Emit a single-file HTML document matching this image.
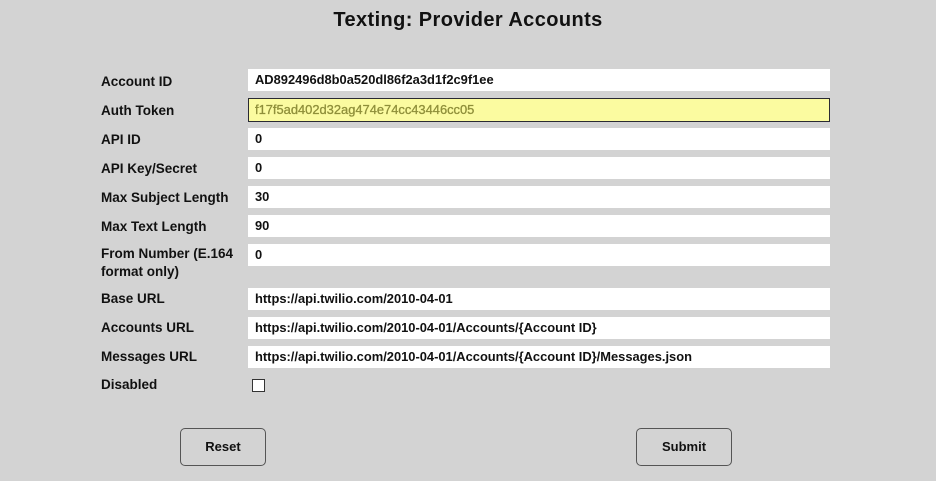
<!DOCTYPE html>
<html><head><meta charset="utf-8"><style>
html,body{margin:0;padding:0}
body{width:936px;height:481px;background:#d3d3d3;position:relative;overflow:hidden;font-family:"Liberation Sans",Arial,sans-serif;color:#111}
h1{position:absolute;top:9px;left:0;width:936px;text-align:center;margin:0;font-size:20px;font-weight:bold;letter-spacing:0.4px}
.l{position:absolute;left:101px;font-size:13.5px;font-weight:bold;line-height:18px}
.i{position:absolute;left:248px;width:582px;height:22px;background:#fff;font-size:12.9px;font-weight:bold;line-height:22px;padding-left:7px;box-sizing:border-box;white-space:nowrap}
.y{background:#fbfba0;border:1px solid #2a2a33;color:#8f8f3a;height:24px;line-height:22px;padding-left:6px;font-weight:normal;-webkit-text-stroke:0.3px #8f8f3a}
.cb{position:absolute;left:252px;top:379px;width:11px;height:11px;border:1px solid #333;background:#fff}
.b{position:absolute;top:428px;height:38px;border:1px solid #555;border-radius:5px;box-sizing:border-box;font-size:13px;font-weight:bold;text-align:center;line-height:36px}
</style></head><body>
<h1>Texting: Provider Accounts</h1>
<div class="l" style="top:73px">Account ID</div><div class="i" style="top:69px">AD892496d8b0a520dl86f2a3d1f2c9f1ee</div>
<div class="l" style="top:102px">Auth Token</div><div class="i y" style="top:98px">f17f5ad402d32ag474e74cc43446cc05</div>
<div class="l" style="top:131px">API ID</div><div class="i" style="top:128px">0</div>
<div class="l" style="top:160px">API Key/Secret</div><div class="i" style="top:157px">0</div>
<div class="l" style="top:189px">Max Subject Length</div><div class="i" style="top:186px">30</div>
<div class="l" style="top:218px">Max Text Length</div><div class="i" style="top:215px">90</div>
<div class="l" style="top:245px">From Number (E.164<br>format only)</div><div class="i" style="top:244px">0</div>
<div class="l" style="top:290px">Base URL</div><div class="i" style="top:288px">https://api.twilio.com/2010-04-01</div>
<div class="l" style="top:319px">Accounts URL</div><div class="i" style="top:317px">https://api.twilio.com/2010-04-01/Accounts/{Account ID}</div>
<div class="l" style="top:348px">Messages URL</div><div class="i" style="top:346px">https://api.twilio.com/2010-04-01/Accounts/{Account ID}/Messages.json</div>
<div class="l" style="top:376px">Disabled</div><div class="cb"></div>
<div class="b" style="left:180px;width:86px">Reset</div>
<div class="b" style="left:636px;width:96px">Submit</div>
</body></html>
